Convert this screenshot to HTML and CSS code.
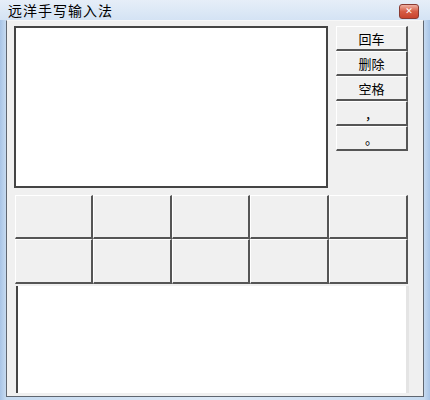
FILE: index.html
```html
<!DOCTYPE html>
<html lang="zh-CN">
<head>
    <meta charset="UTF-8">
    <title>远洋手写输入法</title>
    <link rel="stylesheet" href="styles.css">
</head>
<body>
<div class="window">
    <div class="titlebar">
        <span class="title">远洋手写输入法</span>
        <a class="close"><span>✕</span></a>
    </div>
    <div class="client">
        <div class="top">
            <div class="pad"></div>
            <div class="keys">
                <a class="key">回车</a>
                <a class="key">删除</a>
                <a class="key">空格</a>
                <a class="key">，</a>
                <a class="key">。</a>
            </div>
        </div>
        <div class="cands">
            <a class="cand"></a><a class="cand"></a><a class="cand"></a><a class="cand"></a><a class="cand"></a>
            <a class="cand"></a><a class="cand"></a><a class="cand"></a><a class="cand"></a><a class="cand"></a>
        </div>
        <div class="output"></div>
    </div>
</div>
</body>
</html>
```

FILE: styles.css
```css
*{padding:0;margin:0;box-sizing:border-box;}
html,body{width:430px;height:400px;overflow:hidden;}
body{font-family:"SimSun","Noto Sans CJK SC",sans-serif;}
.window{width:430px;height:400px;display:flex;flex-direction:column;padding:0 6px 0 6px;
    background:linear-gradient(to right,#a8c4e6 0,#c6daf0 6px,#dde9f6 50%,#c6daf0 calc(100% - 6px),#a8c4e6 100%);}
.titlebar{flex:none;height:20px;display:flex;align-items:center;justify-content:space-between;
    background:linear-gradient(to bottom,#e6eef8,#d4e3f4);margin:0 -6px;padding-left:8px;padding-right:11px;}
.title{font-size:14px;letter-spacing:1px;color:#000;line-height:20px;}
.close{display:flex;align-items:center;justify-content:center;width:20px;height:15px;margin-top:2px;border-radius:3px;
    border:1px solid #8a3b32;background:linear-gradient(to bottom,#eeb0a2,#d65c45 50%,#c8432e);}
.close span{color:#fff;font-size:9px;font-weight:bold;font-family:"DejaVu Sans",sans-serif;}
.client{flex:none;height:377px;display:flex;flex-direction:column;background:#f0f0f0;
    border:1px solid #5f6670;border-top-color:#f7f7f7;padding:5px 14px 0 7px;}
.top{display:flex;gap:8px;}
.pad{width:314px;height:162px;background:#fff;border:2px solid #444;}
.keys{display:flex;flex-direction:column;width:72px;}
.key{display:flex;align-items:center;justify-content:center;height:25px;font-size:13px;color:#000;
    border-top:1px solid #fff;border-left:1px solid #fff;border-right:2px solid #555;border-bottom:2px solid #555;}
.cands{display:grid;grid-template-columns:78px 79px 78px 79px 79px;grid-template-rows:44px 45px;margin:7px 0 0 1px;}
.cand{display:block;background:#f0f0f0;border-top:1px solid #fff;border-left:1px solid #fff;
    border-right:2px solid #555;border-bottom:2px solid #555;}
.output{height:107px;margin:2px 0 0 2px;background:#fff;border-left:2px solid #444;border-right:3px solid #e4e4e4;}
```
